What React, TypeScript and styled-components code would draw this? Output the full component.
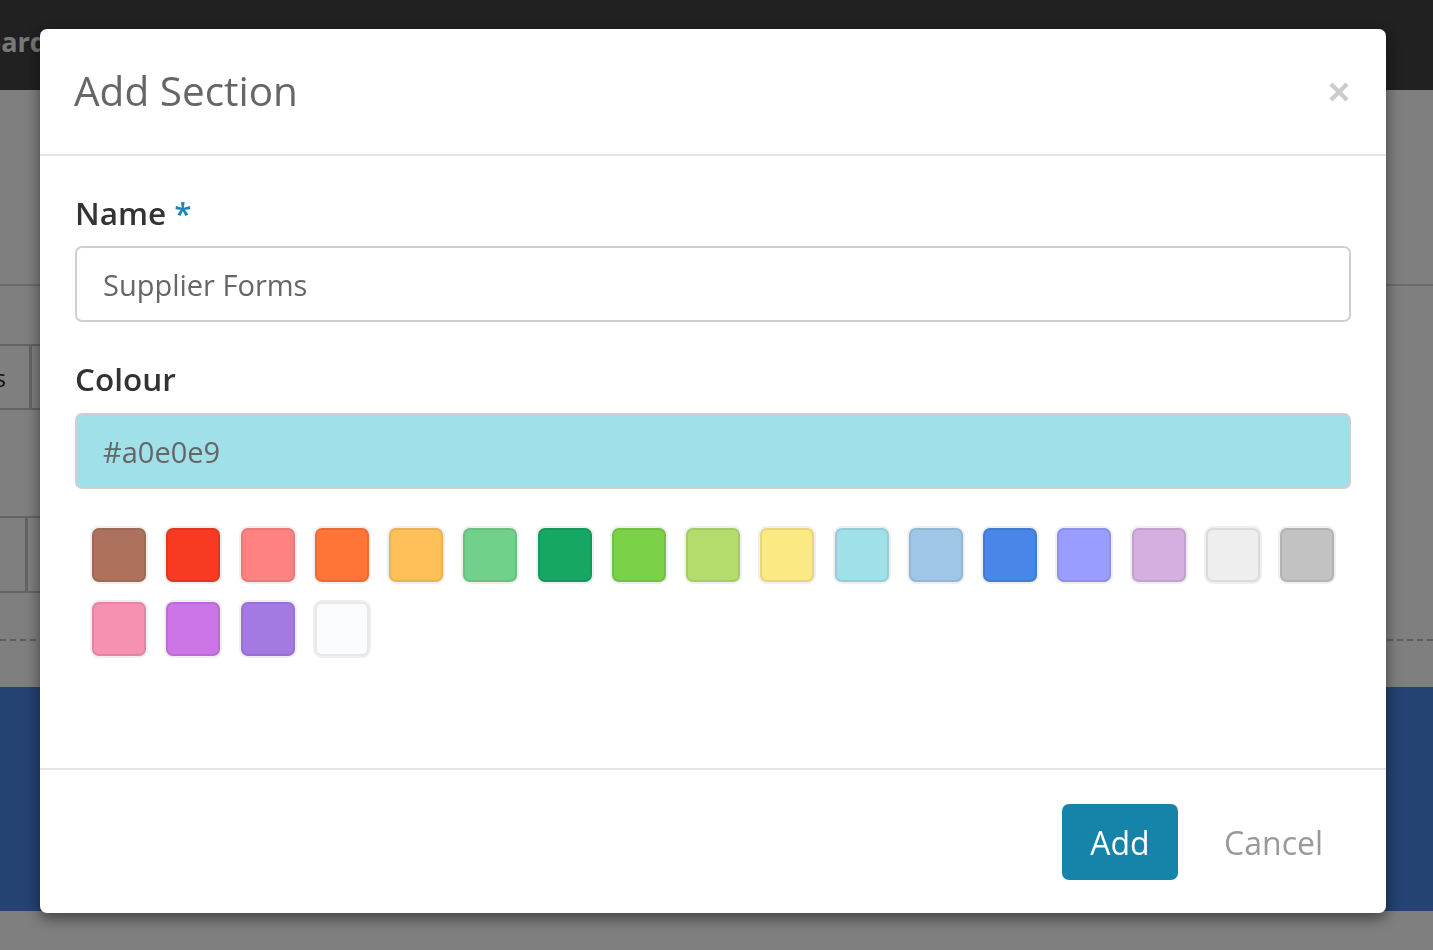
import styled, { createGlobalStyle } from "styled-components";

const GlobalStyle = createGlobalStyle`
  html, body {
    margin: 0;
    padding: 0;
    height: 100%;
    overflow: hidden;
  }
  body {
    font-family: "Open Sans", "Noto Sans", sans-serif;
    background: #ffffff;
  }
`;

const SWATCHES = [
  "#ac725e",
  "#f83a22",
  "#ff8282",
  "#ff7537",
  "#ffc05a",
  "#71d18b",
  "#16a765",
  "#7bd148",
  "#b3dc6c",
  "#fbe983",
  "#a0e0e9",
  "#9fc6e7",
  "#4986e7",
  "#9a9cff",
  "#d4afdf",
  "#eeeeee",
  "#c2c2c2",
  "#f691b2",
  "#cd74e6",
  "#a47ae2",
  "#fbfcfe",
];

export default function App() {
  const selected = "#a0e0e9";

  return (
    <>
      <GlobalStyle />
      <Page>
        <Navbar>
          <Brand>Dashboard</Brand>
        </Navbar>
        <Summary />
        <TableRow $first>
          <TabCell>Forms</TabCell>
        </TableRow>
        <TableRow $width={28}>
          <TabCell />
        </TableRow>
        <DashedRule />
        <Banner />
      </Page>

      <Backdrop>
        <Modal>
          <ModalHeader>
            <ModalTitle>Add Section</ModalTitle>
            <CloseButton aria-label="Close">
              <svg width="22" height="22" viewBox="0 0 22 22">
                <path
                  d="M3 3 L19 19 M19 3 L3 19"
                  stroke="#cbcbcb"
                  strokeWidth="4.2"
                  strokeLinecap="butt"
                />
              </svg>
            </CloseButton>
          </ModalHeader>

          <ModalBody>
            <Label>
              Name <Required>*</Required>
            </Label>
            <TextInput defaultValue="Supplier Forms" />

            <Label $spaced>Colour</Label>
            <TextInput $fill={selected} defaultValue={selected} />

            <SwatchGrid>
              {SWATCHES.map((c) => (
                <Swatch key={c} $color={c} />
              ))}
            </SwatchGrid>
          </ModalBody>

          <ModalFooter>
            <PrimaryButton>Add</PrimaryButton>
            <LinkButton>Cancel</LinkButton>
          </ModalFooter>
        </Modal>
      </Backdrop>
    </>
  );
}

/* page behind the dialog */

const Page = styled.div`
  height: 950px;
  display: flex;
  flex-direction: column;
  background: #fefefe;
`;

const Navbar = styled.div`
  height: 90px;
  background: #424242;
  display: flex;
  align-items: center;
  flex-shrink: 0;
`;

const Brand = styled.div`
  font-size: 27px;
  font-weight: 700;
  color: #f0f0f0;
  margin-left: -100px;
  margin-top: -8px;
`;

const Summary = styled.div`
  height: 194px;
  border-bottom: 2px solid #d8d8d8;
  flex-shrink: 0;
`;

const TableRow = styled.div<{ $first?: boolean; $width?: number }>`
  width: 760px;
  margin-top: ${(p) => (p.$first ? "58px" : "106px")};
  height: ${(p) => (p.$first ? "62px" : "73px")};
  display: grid;
  grid-template-columns: ${(p) => p.$width ?? 32}px 1fr;
  border-top: 2px solid #c8c8c8;
  border-bottom: 2px solid #c8c8c8;
  flex-shrink: 0;
`;

const TabCell = styled.div`
  border-right: 3px solid #c8c8c8;
  font-size: 24px;
  color: #222;
  display: flex;
  align-items: center;
  justify-content: flex-end;
  padding-right: 23px;
  overflow: hidden;
  white-space: nowrap;
`;

const DashedRule = styled.div`
  margin-top: 46px;
  border-top: 2px dashed #bbbbbb;
  flex-shrink: 0;
`;

const Banner = styled.div`
  margin-top: 46px;
  height: 224px;
  background: #4886e6;
  flex-shrink: 0;
`;

/* dialog */

const Backdrop = styled.div`
  position: fixed;
  inset: 0;
  background: rgba(0, 0, 0, 0.5);
  padding: 29px 0 0 40px;
`;

const Modal = styled.div`
  width: 1346px;
  height: 884px;
  background: #fff;
  border-radius: 7px;
  box-shadow: 0 5px 15px rgba(0, 0, 0, 0.5);
  display: flex;
  flex-direction: column;
  overflow: hidden;
`;

const ModalHeader = styled.div`
  height: 125px;
  padding: 0 35px 0 34px;
  border-bottom: 2px solid #e5e5e5;
  display: flex;
  align-items: center;
  justify-content: space-between;
  flex-shrink: 0;
`;

const ModalTitle = styled.h4`
  margin: 0;
  font-size: 40.5px;
  font-weight: 400;
  color: #666;
  margin-top: -2px;
`;

const CloseButton = styled.button`
  border: 0;
  background: none;
  padding: 0;
  margin-right: 1px;
  width: 22px;
  height: 22px;
  display: flex;
`;

const ModalBody = styled.div`
  flex: 1;
  padding: 35px 35px 0;
  display: flex;
  flex-direction: column;
`;

const Label = styled.label<{ $spaced?: boolean }>`
  font-size: 31.5px;
  font-weight: 600;
  color: #333;
  line-height: 44px;
  margin-top: ${(p) => (p.$spaced ? "35px" : "0")};
  margin-bottom: ${(p) => (p.$spaced ? "12px" : "11px")};
`;

const Required = styled.span`
  color: #1a86b8;
`;

const TextInput = styled.input<{ $fill?: string }>`
  box-sizing: border-box;
  height: 76px;
  width: 100%;
  border: 2px solid #cfcfcf;
  border-radius: 7px;
  padding: 0 26px;
  font-family: inherit;
  font-size: 29px;
  color: #666;
  background: ${(p) => p.$fill ?? "#fff"};
  outline: none;
`;

const SwatchGrid = styled.div`
  display: flex;
  flex-wrap: wrap;
  gap: 16px 16.25px;
  padding: 37px 0 0 15px;
`;

const Swatch = styled.div<{ $color: string }>`
  box-sizing: border-box;
  width: 58px;
  height: 58px;
  border-radius: 9px;
  border: 2px solid #efefef;
  background: #efefef;

  &::after {
    content: "";
    display: block;
    box-sizing: border-box;
    width: 54px;
    height: 54px;
    border-radius: 7px;
    background: ${(p) => p.$color};
    border: 2px solid rgba(0, 0, 0, 0.08);
  }
`;

const ModalFooter = styled.div`
  height: 145px;
  box-sizing: border-box;
  border-top: 2px solid #e5e5e5;
  padding: 34px 35px 0;
  display: flex;
  justify-content: flex-end;
  align-items: flex-start;
  gap: 18px;
  flex-shrink: 0;
`;

const PrimaryButton = styled.button`
  height: 76px;
  padding: 0 28.5px;
  border: 0;
  border-radius: 7px;
  background: #1683a8;
  color: #fff;
  font-family: inherit;
  font-size: 32px;
`;

const LinkButton = styled.button`
  height: 76px;
  padding: 0 28px;
  border: 0;
  background: none;
  color: #999;
  font-family: inherit;
  font-size: 32px;
`;
